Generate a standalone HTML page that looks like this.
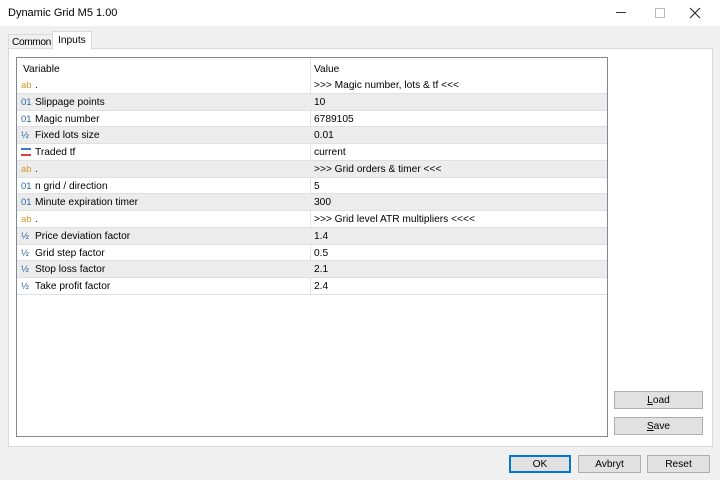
<!DOCTYPE html>
<html><head><style>
*{margin:0;padding:0;box-sizing:border-box}
body{width:720px;height:480px;background:#f0f0f0;font-family:"Liberation Sans",sans-serif;font-size:10.2px;color:#000;position:relative;overflow:hidden}
.title{position:absolute;left:0;top:0;width:720px;height:26px;background:#fff;}
.title .t{position:absolute;left:8px;top:7px;font-size:11px}
.tab{position:absolute;top:35px;font-size:10.2px}
.panel{position:absolute;left:8px;top:48px;width:705px;height:399px;background:#fff;border:1px solid #d9d9d9}
.grid{position:absolute;left:16px;top:57px;width:592px;height:380px;border:1px solid #828790;background:#fff}
.row{position:absolute;left:0;width:590px;height:16.75px;border-bottom:1px solid #e0e0e0}
.row.g{background:#ececec}
.row span{position:absolute;top:3px}
.c1{left:18px}.c2{left:297px}
.ic{position:absolute;left:4px;top:3px;font-size:9.5px}
.div{position:absolute;left:293px;top:0;width:1px;height:237px;background:#e0e0e0}
.btn{position:absolute;background:#e1e1e1;border:1px solid #adadad;text-align:center;font-size:10.2px;line-height:17px}
</style></head><body>
<div class="title"><span class="t">Dynamic Grid M5 1.00</span>
<div style="position:absolute;left:616px;top:12px;width:10px;height:1px;background:#333"></div>
<div style="position:absolute;left:655px;top:8px;width:10px;height:10px;border:1px solid #bbb"></div>
<svg style="position:absolute;left:689px;top:7px" width="12" height="12"><path d="M1 1L11 11M11 1L1 11" stroke="#222" stroke-width="1"/></svg>
</div>
<div style="position:absolute;left:8px;top:34px;width:45px;height:15px;border:1px solid #d9d9d9;border-bottom:none;background:#f0f0f0"></div>
<div class="tab" style="left:12px;top:37px;letter-spacing:-0.4px">Common</div>
<div style="position:absolute;left:52px;top:31px;width:40px;height:19px;border:1px solid #d9d9d9;border-bottom:none;background:#fff;z-index:2"></div>
<div class="tab" style="left:58px;top:35px;z-index:3">Inputs</div>
<div class="panel"></div>
<div class="grid">
<div class="row" style="top:3px;border:none;height:18px"><span style="left:6px">Variable</span><span class="c2">Value</span></div>
<div class="div"></div>
<div style="position:absolute;top:19px;left:0">
<div class="row" style="top:0"><i class="ic" style="color:#d39a2b;font-style:normal">ab</i><span class="c1">.</span><span class="c2">&gt;&gt;&gt; Magic number, lots &amp; tf &lt;&lt;&lt;</span></div>
<div class="row g" style="top:16.75px"><i class="ic" style="color:#2a63a8;font-style:normal">01</i><span class="c1">Slippage points</span><span class="c2">10</span></div>
<div class="row" style="top:33.5px"><i class="ic" style="color:#2a63a8;font-style:normal">01</i><span class="c1">Magic number</span><span class="c2">6789105</span></div>
<div class="row g" style="top:50.25px"><i class="ic" style="color:#2a63a8;font-style:normal">½</i><span class="c1">Fixed lots size</span><span class="c2">0.01</span></div>
<div class="row" style="top:67px"><i class="ic" style="top:4px;width:10px;height:8px;border-top:2px solid #3a7bd5;border-bottom:2px solid #e04040"></i><span class="c1">Traded tf</span><span class="c2">current</span></div>
<div class="row g" style="top:83.75px"><i class="ic" style="color:#d39a2b;font-style:normal">ab</i><span class="c1">.</span><span class="c2">&gt;&gt;&gt; Grid orders &amp; timer &lt;&lt;&lt;</span></div>
<div class="row" style="top:100.5px"><i class="ic" style="color:#2a63a8;font-style:normal">01</i><span class="c1">n grid / direction</span><span class="c2">5</span></div>
<div class="row g" style="top:117.25px"><i class="ic" style="color:#2a63a8;font-style:normal">01</i><span class="c1">Minute expiration timer</span><span class="c2">300</span></div>
<div class="row" style="top:134px"><i class="ic" style="color:#d39a2b;font-style:normal">ab</i><span class="c1">.</span><span class="c2">&gt;&gt;&gt; Grid level ATR multipliers &lt;&lt;&lt;&lt;</span></div>
<div class="row g" style="top:150.75px"><i class="ic" style="color:#2a63a8;font-style:normal">½</i><span class="c1">Price deviation factor</span><span class="c2">1.4</span></div>
<div class="row" style="top:167.5px"><i class="ic" style="color:#2a63a8;font-style:normal">½</i><span class="c1">Grid step factor</span><span class="c2">0.5</span></div>
<div class="row g" style="top:184.25px"><i class="ic" style="color:#2a63a8;font-style:normal">½</i><span class="c1">Stop loss factor</span><span class="c2">2.1</span></div>
<div class="row" style="top:201px"><i class="ic" style="color:#2a63a8;font-style:normal">½</i><span class="c1">Take profit factor</span><span class="c2">2.4</span></div>
</div>
</div>
<div class="btn" style="left:614px;top:391px;width:89px;height:18px"><u>L</u>oad</div>
<div class="btn" style="left:614px;top:417px;width:89px;height:18px"><u>S</u>ave</div>
<div class="btn" style="left:509px;top:455px;width:62px;height:18px;border:2px solid #0078d7;line-height:15px">OK</div>
<div class="btn" style="left:578px;top:455px;width:63px;height:18px">Avbryt</div>
<div class="btn" style="left:647px;top:455px;width:63px;height:18px">Reset</div>
</body></html>
